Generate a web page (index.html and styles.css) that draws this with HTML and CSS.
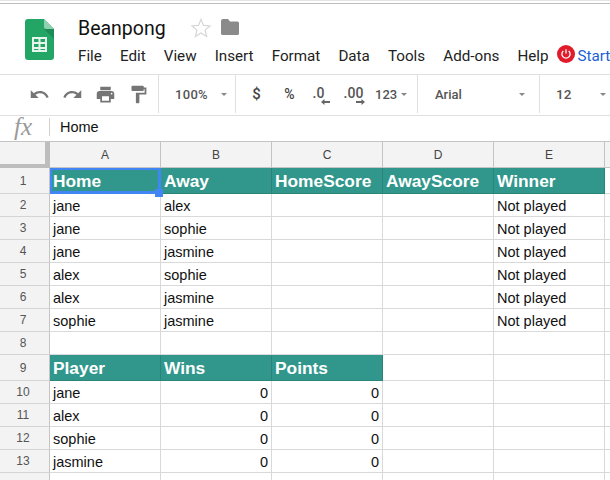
FILE: index.html
```html
<!DOCTYPE html>
<html lang="en">
<head>
<meta charset="utf-8">
<title>Beanpong</title>
<link rel="stylesheet" href="styles.css">
</head>
<body>
<div class="app">
  <div class="top-edge"></div>
  <header class="header">
    <svg class="logo" viewBox="0 0 29 41" aria-hidden="true">
      <path d="M3 0H19L29 10V38a3 3 0 0 1-3 3H3a3 3 0 0 1-3-3V3a3 3 0 0 1 3-3z" fill="#23a566"/>
      <path d="M19 10L29 20V10z" fill="#1c8c56"/>
      <path d="M19 0L29 10H21a2 2 0 0 1-2-2z" fill="#8ed1b1"/>
      <path d="M7 18H22V33H7zM9 20V23H13.5V20zM15.5 20V23H20V20zM9 25V28H13.5V25zM15.5 25V28H20V25zM9 30V31H13.5V30zM15.5 30V31H20V30z" fill="#e8f5ee" fill-rule="evenodd"/>
    </svg>
    <div class="doc">
      <div class="title-row">
        <span class="title">Beanpong</span>
        <svg class="star" viewBox="0 0 24 24" aria-hidden="true"><path d="M12 2.6l2.7 6.6 7.1.5-5.4 4.6 1.7 6.9-6.1-3.7-6.1 3.7 1.7-6.9-5.4-4.6 7.1-.5z" fill="none" stroke="#d6d6d6" stroke-width="1.3"/></svg>
        <svg class="folder" viewBox="0 0 18 16" aria-hidden="true"><path d="M2 0H7L9 2.5H16.5A1.5 1.5 0 0 1 18 4V14.5A1.5 1.5 0 0 1 16.5 16H1.5A1.5 1.5 0 0 1 0 14.5V2A2 2 0 0 1 2 0z" fill="#8a8a8a"/></svg>
      </div>
      <nav class="menu">
        <span>File</span><span>Edit</span><span>View</span><span>Insert</span><span>Format</span><span>Data</span><span>Tools</span><span>Add-ons</span><span>Help</span>
        <svg class="power" viewBox="0 0 18 18" aria-hidden="true"><circle cx="9" cy="9" r="9" fill="#e01b2b"/><path d="M9 4.2V8.6" stroke="#fff" stroke-width="1.3" fill="none"/><path d="M6.3 6A4.1 4.1 0 1 0 11.7 6" stroke="#fff" stroke-width="1.3" fill="none"/></svg>
        <span class="start">Start</span>
      </nav>
    </div>
  </header>
  <div class="toolbar">
    <div class="tool-group history">
      <span class="btn"><svg class="ico" viewBox="0 0 24 24"><path d="M12.5 8c-2.65 0-5.05.99-6.9 2.6L2 7v9h9l-3.62-3.62c1.39-1.16 3.16-1.88 5.12-1.88 3.54 0 6.55 2.31 7.6 5.5l2.37-.78C21.08 11.03 17.15 8 12.5 8z"/></svg></span>
      <span class="btn"><svg class="ico" viewBox="0 0 24 24"><path d="M18.4 10.6C16.55 8.99 14.15 8 11.5 8c-4.65 0-8.58 3.03-9.96 7.22L3.9 16c1.05-3.19 4.05-5.5 7.6-5.5 1.95 0 3.73.72 5.12 1.88L13 16h9V7l-3.6 3.6z"/></svg></span>
      <span class="btn"><svg class="ico" viewBox="0 0 24 24"><path d="M19 8H5c-1.66 0-3 1.34-3 3v6h4v4h12v-4h4v-6c0-1.66-1.34-3-3-3zm-3 11H8v-5h8v5zm3-7c-.55 0-1-.45-1-1s.45-1 1-1 1 .45 1 1-.45 1-1 1zm-1-9H6v4h12V3z"/></svg></span>
      <span class="btn"><svg class="ico" viewBox="0 0 24 24"><path d="M18 4V3c0-.55-.45-1-1-1H5c-.55 0-1 .45-1 1v4c0 .55.45 1 1 1h12c.55 0 1-.45 1-1V6h1v4H9v11c0 .55.45 1 1 1h2c.55 0 1-.45 1-1v-9h8V4h-3z"/></svg></span>
    </div>
    <div class="tool-group zoom">
      <span class="tool-text">100%</span><span class="caret"></span>
    </div>
    <div class="tool-group format">
      <span class="btn sym">$</span>
      <span class="btn sym pct">%</span>
      <span class="btn dec"><span class="dec-text one">.0</span><svg class="arrow left" viewBox="0 0 9 6"><path d="M0 3L3.5 0V2H9V4H3.5V6z"/></svg></span>
      <span class="btn dec"><span class="dec-text two">.00</span><svg class="arrow right" viewBox="0 0 9 6"><path d="M9 3L5.5 0V2H0V4H5.5V6z"/></svg></span>
      <span class="num-format">123</span><span class="caret"></span>
    </div>
    <div class="tool-group font">
      <span class="tool-text font-name">Arial</span><span class="caret"></span>
    </div>
    <div class="tool-group size">
      <span class="tool-text">12</span><span class="caret"></span>
    </div>
  </div>
  <div class="formula">
    <span class="fx">fx</span>
    <span class="formula-sep"></span>
    <span class="formula-value">Home</span>
  </div>
  <div class="sheet">
    <div class="corner"></div><div class="col">A</div><div class="col">B</div><div class="col">C</div><div class="col">D</div><div class="col">E</div><div class="col"></div>

    <div class="rowh tall">1</div><div class="cell head selected">Home<span class="handle"></span></div><div class="cell head">Away</div><div class="cell head">HomeScore</div><div class="cell head">AwayScore</div><div class="cell head">Winner</div><div class="cell"></div>
    <div class="rowh">2</div><div class="cell">jane</div><div class="cell">alex</div><div class="cell"></div><div class="cell"></div><div class="cell">Not played</div><div class="cell"></div>
    <div class="rowh">3</div><div class="cell">jane</div><div class="cell">sophie</div><div class="cell"></div><div class="cell"></div><div class="cell">Not played</div><div class="cell"></div>
    <div class="rowh">4</div><div class="cell">jane</div><div class="cell">jasmine</div><div class="cell"></div><div class="cell"></div><div class="cell">Not played</div><div class="cell"></div>
    <div class="rowh">5</div><div class="cell">alex</div><div class="cell">sophie</div><div class="cell"></div><div class="cell"></div><div class="cell">Not played</div><div class="cell"></div>
    <div class="rowh">6</div><div class="cell">alex</div><div class="cell">jasmine</div><div class="cell"></div><div class="cell"></div><div class="cell">Not played</div><div class="cell"></div>
    <div class="rowh">7</div><div class="cell">sophie</div><div class="cell">jasmine</div><div class="cell"></div><div class="cell"></div><div class="cell">Not played</div><div class="cell"></div>
    <div class="rowh">8</div><div class="cell"></div><div class="cell"></div><div class="cell"></div><div class="cell"></div><div class="cell"></div><div class="cell"></div>
    <div class="rowh tall">9</div><div class="cell head">Player</div><div class="cell head">Wins</div><div class="cell head">Points</div><div class="cell"></div><div class="cell"></div><div class="cell"></div>
    <div class="rowh">10</div><div class="cell">jane</div><div class="cell num">0</div><div class="cell num">0</div><div class="cell"></div><div class="cell"></div><div class="cell"></div>
    <div class="rowh">11</div><div class="cell">alex</div><div class="cell num">0</div><div class="cell num">0</div><div class="cell"></div><div class="cell"></div><div class="cell"></div>
    <div class="rowh">12</div><div class="cell">sophie</div><div class="cell num">0</div><div class="cell num">0</div><div class="cell"></div><div class="cell"></div><div class="cell"></div>
    <div class="rowh">13</div><div class="cell">jasmine</div><div class="cell num">0</div><div class="cell num">0</div><div class="cell"></div><div class="cell"></div><div class="cell"></div>
    <div class="rowh"></div><div class="cell"></div><div class="cell"></div><div class="cell"></div><div class="cell"></div><div class="cell"></div><div class="cell"></div>
  </div>
</div>
</body>
</html>
```

FILE: styles.css
```css
* { box-sizing: border-box; }
html, body { margin: 0; padding: 0; height: 480px; overflow: hidden; background: #fff; }
.app { width: 610px; height: 480px; overflow: hidden; font-family: Roboto, "Liberation Sans", sans-serif; color: #222; }

.top-edge { height: 4px; border-top: 1px solid #e4e4e4; border-bottom: 1px solid #bdbdbd; }

.header { height: 71px; display: flex; border-bottom: 1px solid #e0e0e0; padding-left: 24.5px; }
.logo { width: 29px; height: 41px; margin-top: 15px; margin-right: 24.5px; flex: none; }
.doc { flex: 1; min-width: 0; }
.title-row { display: flex; align-items: center; height: 30px; margin-top: 9px; }
.title { font-size: 19.5px; color: #111; width: 110px; }
.star { width: 22px; height: 22px; margin-left: 2px; }
.folder { width: 18px; height: 16px; margin-left: 9px; margin-top: -2px; }
.menu { display: flex; align-items: center; font-size: 15.2px; color: #222; height: 20px; margin-top: 3px; white-space: nowrap; }
.menu > span { margin-right: 18.1px; flex: none; }
.menu > span:nth-of-type(9) { margin-right: 8px; }
.power { width: 18px; height: 18px; flex: none; margin-right: 3px; margin-top: -4px; }
.menu > .start { color: #1a5fd6; margin: 0; }

.toolbar { height: 41px; display: flex; border-bottom: 1px solid #e0e0e0; align-items: flex-start; color: #555; font-size: 13px; }
.tool-group { height: 38px; display: flex; align-items: center; border-right: 1px solid #e0e0e0; flex: none; position: relative; }
.history { width: 159px; padding-left: 22.5px; }
.zoom { width: 77px; padding-left: 16px; }
.format { width: 182px; padding-left: 4px; }
.font { width: 122px; padding-left: 17px; }
.size { width: 71px; padding-left: 16px; border-right: 0; }
.btn { width: 33px; height: 38px; display: flex; align-items: center; justify-content: center; flex: none; position: relative; }
.ico { width: 21px; height: 21px; fill: #757575; }
.tool-text { font-weight: 500; }
.zoom .tool-text { width: 46px; letter-spacing: .3px; }
.font-name { width: 84px; font-size: 13px; }
.size .tool-text { width: 44px; font-size: 13.5px; }
.caret { width: 0; height: 0; border-left: 3px solid transparent; border-right: 3px solid transparent; border-top: 3px solid #888; flex: none; }
.sym { font-size: 15px; font-weight: 500; color: #444; }
.pct { font-size: 14px; }
.dec { align-items: flex-start; font-weight: 500; color: #555; }
.dec-text { font-size: 14px; margin-top: 10px; line-height: 16px; }
.dec-text.one { margin-right: 8px; }
.dec-text.two { margin-right: 4px; }
.arrow { position: absolute; top: 24px; width: 9px; height: 6px; fill: #666; }
.arrow.left { left: 15px; }
.arrow.right { left: 17px; }
.num-format { font-weight: 500; font-size: 13px; color: #555; margin-left: 3px; margin-right: 4px; }

.formula { height: 26px; display: flex; align-items: center; border-bottom: 1px solid #c4c4c4; padding-bottom: 3px; }
.fx { width: 49px; padding-left: 14px; font-family: "Liberation Serif", serif; font-style: italic; font-size: 25px; color: #9a9a9a; line-height: 22px; }
.formula-sep { width: 1px; height: 18px; background: #d0d0d0; }
.formula-value { margin-left: 10px; font-family: "Liberation Sans", Arial, sans-serif; font-size: 14.5px; color: #111; }

.sheet { display: grid; grid-template-columns: 50px repeat(5, 111px) 5px; grid-template-rows: 26px 26px repeat(7, 23px) 26px repeat(5, 23px); font-family: "Liberation Sans", Arial, sans-serif; }
.corner { background: #f3f3f3; border-right: 5px solid #bdbdbd; border-bottom: 4px solid #bdbdbd; }
.col { background: #f3f3f3; border-right: 1px solid #c4c4c4; border-bottom: 1px solid #c4c4c4; display: flex; align-items: center; justify-content: center; font-size: 12px; color: #444; }
.rowh { background: #f3f3f3; border-right: 1px solid #c4c4c4; border-bottom: 1px solid #d4d4d4; display: flex; align-items: center; justify-content: center; padding-right: 3px; font-size: 12px; color: #555; }
.cell { border-right: 1px solid #d9d9d9; border-bottom: 1px solid #d9d9d9; padding: 1px 3px 0; font-size: 14.5px; color: #111; display: flex; align-items: center; white-space: nowrap; position: relative; }
.sheet > :nth-child(7n) { border-right: 0; }
.head { background: #31978c; color: #fff; font-weight: 700; font-size: 17.33px; border-right-color: #2a8579; border-bottom-color: #2a8579; }
.num { justify-content: flex-end; }
.selected { box-shadow: inset 0 0 0 2px #4285f4; border-right-color: #4285f4; border-bottom-color: #4285f4; }
.handle { position: absolute; right: -3px; bottom: -4px; width: 8px; height: 8px; background: #4285f4; z-index: 2; }
```
